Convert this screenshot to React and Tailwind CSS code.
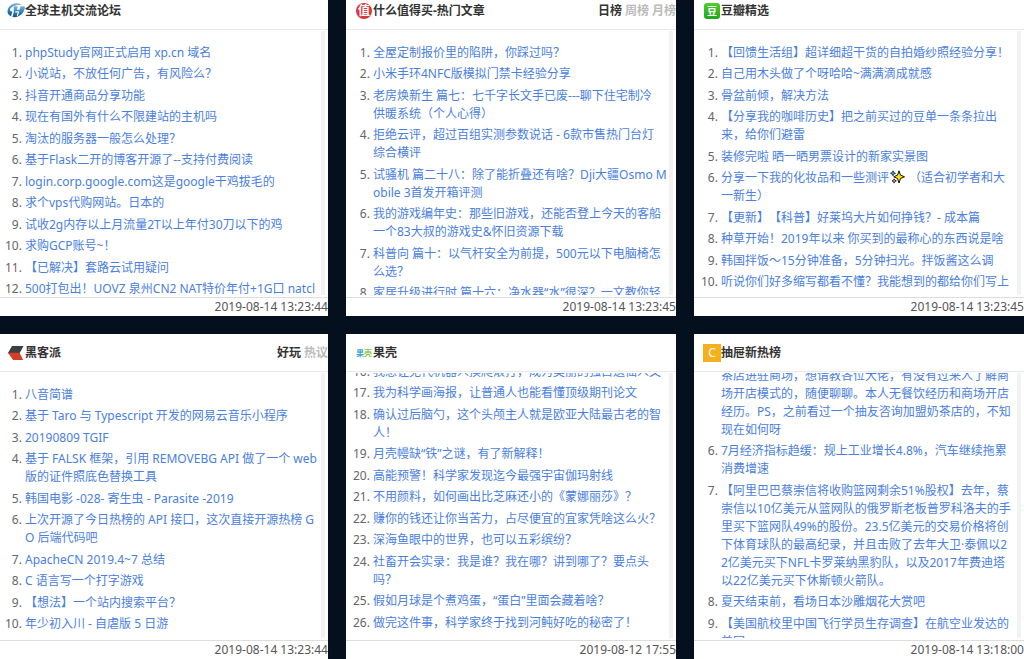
import React from "react";

function ForumIcon() {
  return (
    <svg viewBox="0 0 18 18" className="size-[18px]" aria-hidden="true">
      <defs>
        <linearGradient id="forum" x1="0" y1="0" x2="0" y2="1">
          <stop offset="0" stopColor="#7fb3d3" />
          <stop offset=".5" stopColor="#2f86bf" />
          <stop offset="1" stopColor="#1a4f86" />
        </linearGradient>
      </defs>
      <path d="M14.800 3.200C12.500.6 7.500.4 4 3 .6 5.600-.6 10 1.600 12.600c.6.8 1.500 1.300 2.400 1.600l1.400-4.800C4 9.400 3.200 9 3 8.200 3 5.500 7.500 2.300 14.800 3.200z" fill="url(#forum)" />
      <path d="M6.800 4.300h4L9.900 7.700h2.600l1-3.400h4.300c.4 5.600-4.700 11.600-12.300 10.800l1.300-5.200z" fill="url(#forum)" />
      <path d="M8.300 9.900h3.200L10.300 13.900" fill="none" stroke="#fff" strokeWidth="1.200" />
    </svg>
  );
}

function SmzdmIcon() {
  return (
    <span className="flex size-4 items-center justify-center rounded-full bg-[#d8373d] text-[12px] leading-4 text-white" aria-hidden="true">
      值
    </span>
  );
}

function DoubanIcon() {
  return (
    <span className="flex size-4 items-center justify-center rounded-[3px] bg-linear-to-b from-[#4ccf2c] to-[#1fa51b] text-[10px] leading-4 text-white" aria-hidden="true">
      豆
    </span>
  );
}

function HackerIcon() {
  return (
    <svg viewBox="0 0 18 18" className="size-[18px]" aria-hidden="true">
      <path d="M5 2h11.500L12.600 9.200H.8z" fill="#3b3f42" />
      <path d="M.8 8.800h11.800L16.200 16H6.200z" fill="#d23f25" />
    </svg>
  );
}

function GuokrIcon() {
  return (
    <span className="flex text-[8px] leading-4" aria-hidden="true">
      <span className="text-[#3aa6cf]">果</span>
      <span className="text-[#8cc63f]">壳</span>
    </span>
  );
}

function LetterIcon() {
  return (
    <span className="flex size-[18px] items-center justify-center bg-[#f5b11c] text-[12px] leading-4 font-normal text-white" aria-hidden="true">
      C
    </span>
  );
}

function Sparkles() {
  return (
    <svg viewBox="0 0 15 14" className="mx-px mr-1 inline h-[14px] w-[15px] align-[-2px]" role="img" aria-label="sparkles">
      <path d="M9 .8l1.500 4.300 4 1.700-4 1.700L9 13 7.500 8.500l-3.800-1.700 3.800-1.700z" fill="#ffe000" stroke="#111" strokeWidth="1" />
      <path d="M3 .8l.8 1.800 1.700.7-1.700.8L3 5.800l-.8-1.700-1.700-.8 1.700-.7z" fill="#2bc4d8" stroke="#111" strokeWidth=".8" />
      <path d="M4.200 8.800l.7 1.400 1.500.7-1.500.7-.7 1.500-.7-1.500-1.500-.7 1.500-.7z" fill="#f08ac0" stroke="#111" strokeWidth=".8" />
    </svg>
  );
}

const boards = [
  {
    title: "全球主机交流论坛",
    Icon: ForumIcon,
    time: "2019-08-14 13:23:44",
    items: [
      "phpStudy官网正式启用 xp.cn 域名",
      "小说站，不放任何广告，有风险么？",
      "抖音开通商品分享功能",
      "现在有国外有什么不限建站的主机吗",
      "淘汰的服务器一般怎么处理？",
      "基于Flask二开的博客开源了--支持付费阅读",
      "login.corp.google.com这是google干鸡拔毛的",
      "求个vps代购网站。日本的",
      "试收2g内存以上月流量2T以上年付30刀以下的鸡",
      "求购GCP账号~！",
      "【已解决】套路云试用疑问",
      "500打包出！UOVZ 泉州CN2 NAT特价年付+1G口 natcl",
    ],
  },
  {
    title: "什么值得买-热门文章",
    Icon: SmzdmIcon,
    tabs: ["日榜", "周榜", "月榜"],
    time: "2019-08-14 13:23:45",
    items: [
      "全屋定制报价里的陷阱，你踩过吗？",
      "小米手环4NFC版模拟门禁卡经验分享",
      "老房焕新生 篇七：七千字长文手已废---聊下住宅制冷\n供暖系统（个人心得）",
      "拒绝云评，超过百组实测参数说话 - 6款市售热门台灯\n综合横评",
      "试骚机 篇二十八：除了能折叠还有啥？Dji大疆Osmo Mobile 3首发开箱评测",
      "我的游戏编年史：那些旧游戏，还能否登上今天的客船 一个83大叔的游戏史&怀旧资源下载",
      "科普向 篇十：以气杆安全为前提，500元以下电脑椅怎么选？",
      "家居升级进行时 篇十六：净水器“水”很深？一文教你轻松选",
    ],
  },
  {
    title: "豆瓣精选",
    Icon: DoubanIcon,
    time: "2019-08-14 13:23:45",
    items: [
      "【回馈生活组】超详细超干货的自拍婚纱照经验分享！",
      "自己用木头做了个呀哈哈~满满滴成就感",
      "骨盆前倾，解决方法",
      "【分享我的咖啡历史】把之前买过的豆单一条条拉出来，给你们避雷",
      "装修完啦 晒一晒男票设计的新家实景图",
      <>分享一下我的化妆品和一些测评<Sparkles />（适合初学者和大{"\n"}一新生）</>,
      "【更新】【科普】好莱坞大片如何挣钱？- 成本篇",
      "种草开始！2019年以来 你买到的最称心的东西说是啥",
      "韩国拌饭～15分钟准备，5分钟扫光。拌饭酱这么调",
      "听说你们好多缩写都看不懂？我能想到的都给你们写上",
    ],
  },
  {
    title: "黑客派",
    Icon: HackerIcon,
    tabs: ["好玩", "热议"],
    time: "2019-08-14 13:23:44",
    items: [
      "八音简谱",
      "基于 Taro 与 Typescript 开发的网易云音乐小程序",
      "20190809 TGIF",
      "基于 FALSK 框架，引用 REMOVEBG API 做了一个 web 版的证件照底色替换工具",
      "韩国电影 -028- 寄生虫 - Parasite -2019",
      "上次开源了今日热榜的 API 接口，这次直接开源热榜 GO 后端代码吧",
      "ApacheCN 2019.4~7 总结",
      "C 语言写一个打字游戏",
      "【想法】一个站内搜索平台？",
      "年少初入川 - 自虐版 5 日游",
    ],
  },
  {
    title: "果壳",
    Icon: GuokrIcon,
    time: "2019-08-12 17:55",
    start: 16,
    offset: "-mt-2.5",
    items: [
      "我想让无代机器人摸爬滚打，成为美丽的独占遗仙人文",
      "我为科学画海报，让普通人也能看懂顶级期刊论文",
      "确认过后脑勺，这个头颅主人就是欧亚大陆最古老的智人！",
      "月壳幔缺“铁”之谜，有了新解释！",
      "高能预警！科学家发现迄今最强宇宙伽玛射线",
      "不用颜料，如何画出比芝麻还小的《蒙娜丽莎》？",
      "赚你的钱还让你当苦力，占尽便宜的宜家凭啥这么火？",
      "深海鱼眼中的世界，也可以五彩缤纷？",
      "社畜开会实录：我是谁？我在哪？讲到哪了？要点头吗？",
      "假如月球是个煮鸡蛋，“蛋白”里面会藏着啥？",
      "做完这件事，科学家终于找到河鲀好吃的秘密了！",
    ],
  },
  {
    title: "抽屉新热榜",
    Icon: LetterIcon,
    time: "2019-08-14 13:18:00",
    start: 5,
    offset: "-mt-6",
    items: [
      "打算加盟一家奶\n茶店进驻商场，想请教各位大佬，有没有过来人了解商场开店模式的，随便聊聊。本人无餐饮经历和商场开店经历。PS，之前看过一个抽友咨询加盟奶茶店的，不知现在如何呀",
      "7月经济指标趋缓：规上工业增长4.8%，汽车继续拖累消费增速",
      "【阿里巴巴蔡崇信将收购篮网剩余51%股权】去年，蔡崇信以10亿美元从篮网队的俄罗斯老板普罗科洛夫的手里买下篮网队49%的股份。23.5亿美元的交易价格将创\n下体育球队的最高纪录，并且击败了去年大卫·泰佩以2\n2亿美元买下NFL卡罗莱纳黑豹队，以及2017年费迪塔\n以22亿美元买下休斯顿火箭队。",
      "夏天结束前，看场日本沙雕烟花大赏吧",
      "【美国航校里中国飞行学员生存调查】在航空业发达的美国",
    ],
  },
];

function Board({ title, Icon, tabs = [], time, start = 1, offset = "pt-[13px]", items }) {
  return (
    <section className="flex min-h-0 min-w-0 flex-col bg-white">
      <header className="flex h-[38px] shrink-0 items-center border-b border-[#e8e8e8] pl-[9px] font-bold text-[#333]">
        <span className="flex w-[18px] shrink-0 justify-center">
          <Icon />
        </span>
        <h2>{title}</h2>
        {tabs.length > 0 && (
          <nav className="ml-auto flex gap-[3px]">
            {tabs.map((tab, i) => (
              <button key={tab} type="button" className={i === 0 ? "text-[#333]" : "text-[#bbb]"}>
                {tab}
              </button>
            ))}
          </nav>
        )}
      </header>
      <div className="mt-px mb-[2px] flex min-h-0 flex-1 overflow-hidden pr-[3px]">
        <ol
          start={start}
          className={
            "min-w-0 flex-1 list-decimal pl-[27px] break-all whitespace-pre-line text-[#666] " + offset
          }
        >
          {items.map((item, i) => (
            <li key={i} className="mb-[3px] even:mb-1">
              <a href="#" className="text-[#4a80e0]">
                {item}
              </a>
            </li>
          ))}
        </ol>
        <div className="w-1 shrink-0 bg-[#f2f2f2]" />
      </div>
      <footer className="h-[19px] shrink-0 border-t border-[#ddd] text-right text-[#555]">
        <time>{time}</time>
      </footer>
    </section>
  );
}

export default function App() {
  return (
    <div className="min-h-screen overflow-hidden bg-[#05101f] font-['Noto_Sans','Noto_Sans_CJK_SC',sans-serif] text-[12px] leading-[18px] [text-spacing-trim:space-all]">
      <main className="-mt-2 -ml-0.5 grid grid-cols-3 grid-rows-[324px_325px] gap-[18px]">
        {boards.map((board) => (
          <Board key={board.title} {...board} />
        ))}
      </main>
    </div>
  );
}
